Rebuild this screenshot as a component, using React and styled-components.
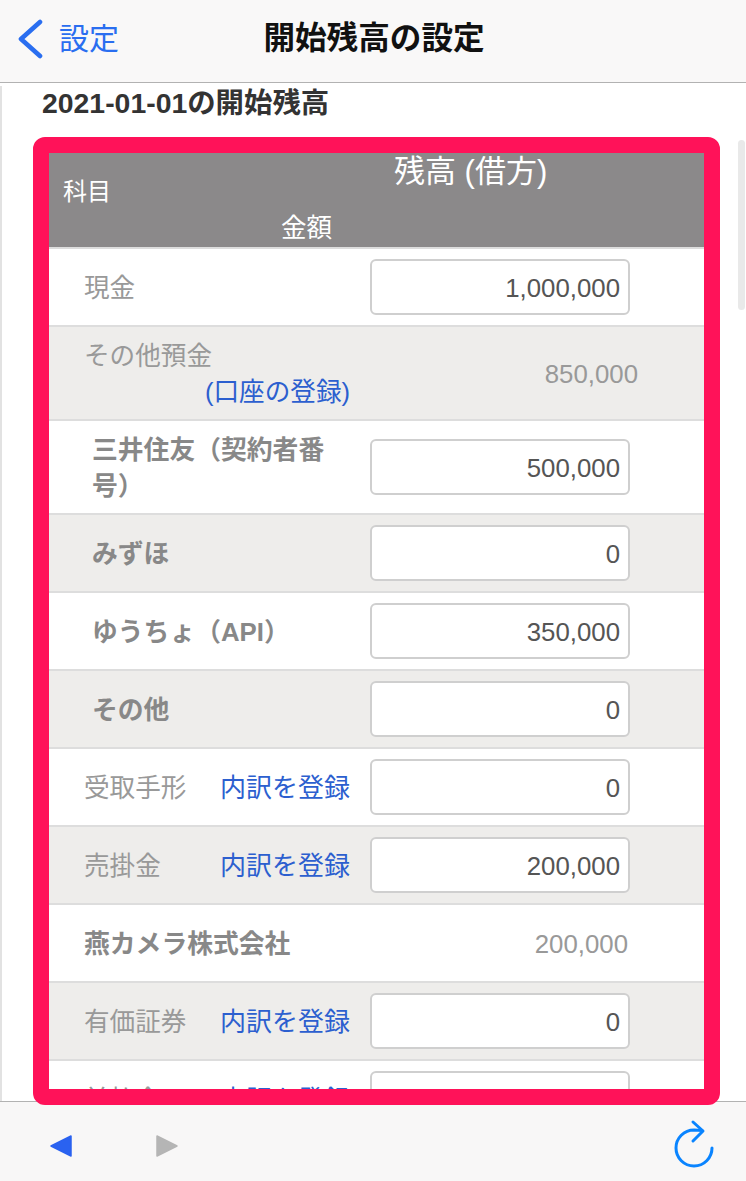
import React from "react";
import styled, { createGlobalStyle } from "styled-components";

const Global = createGlobalStyle`
  html, body { margin: 0; padding: 0; background: #fff; }
  body { font-family: "Liberation Sans", "Noto Sans CJK JP", sans-serif; }
  * { box-sizing: border-box; }
`;

const Page = styled.div`
  width: 746px; height: 1181px; display: flex; flex-direction: column; overflow: hidden; background: #fff;
`;
const TopBar = styled.header`
  height: 83px; flex: none; background: #f9f8f8; border-bottom: 1px solid #b2b2b2;
  display: flex; align-items: center; position: relative; padding-left: 17px; padding-bottom: 5px;
`;
const BackLink = styled.span`
  display: flex; align-items: center; gap: 14px; color: #2a6ef0; font-size: 30px; line-height: 40px;
`;
const Title = styled.h1`
  position: absolute; left: 2px; right: 0; top: 18px; margin: 0; text-align: center;
  font-size: 31.6px; line-height: 40px; font-weight: 700; color: #111;
`;
const Main = styled.main`
  flex: 1 1 0; min-height: 0; position: relative; z-index: 1; border-left: 2px solid #e2e2e2; margin-top: 3px; padding-left: 31px;
`;
const Heading = styled.h2`
  margin: 0; padding-left: 9px; height: 51px; font-size: 28.4px; line-height: 34px; font-weight: 700; color: #333; white-space: nowrap;
`;
const Frame = styled.div`
  width: 687px; height: 968px; border: 16px solid #ff1259; border-radius: 12px; overflow: hidden; background: #fff;
`;
const Scrollbar = styled.div`
  position: absolute; right: 1px; top: 54px; width: 7px; height: 170px; border-radius: 4px; background: #e9e9e9;
`;
const TableHead = styled.div`
  height: 96px; background: #8b898a; border-bottom: 2px solid #dddddd; color: #fff;
  display: grid; grid-template-columns: 190px 135px 1fr; grid-template-rows: 57px 37px;
`;
const HeadSubject = styled.div`
  grid-column: 1; grid-row: 1 / 3; font-size: 24px; line-height: 77px; padding-left: 14px;
`;
const HeadBalance = styled.div`
  grid-column: 2 / 4; grid-row: 1; font-size: 31px; line-height: 38px; padding-left: 155px; white-space: nowrap;
`;
const HeadAmount = styled.div`
  grid-column: 2; grid-row: 2; font-size: 25.6px; line-height: 36px; text-align: center;
`;
const Row = styled.div`
  height: ${(p) => p.$h || 78}px; background: ${(p) => (p.$shade ? "#eeedeb" : "#fff")};
  border-bottom: 2px solid #dddddd; display: grid; grid-template-columns: 321px 1fr; align-items: center;
`;
const LabelCell = styled.div`
  padding: 2px 20px 0 35px; display: flex; justify-content: space-between; align-items: center;
  font-size: 25.6px; line-height: 36px; color: #999; white-space: nowrap;
`;
const StackCell = styled.div`
  padding: 2px 20px 0 35px; font-size: 25.6px; line-height: 36px; color: #999; white-space: nowrap;
`;
const SubLabel = styled.div`
  padding: 2px 20px 0 ${(p) => p.$indent ?? 43}px; font-size: 25.8px; line-height: 36px; font-weight: 700; color: #888;
`;
const AccountLink = styled.span`
  color: #2c5fcf; font-size: 26px;
`;
const RightLink = styled(AccountLink)`
  display: block; text-align: right; font-size: 25.6px;
`;
const AmountInput = styled.div`
  width: 260px; height: 56px; border: 2px solid #cfcfcf; border-radius: 6px; background: #fff;
  font-size: 25.8px; line-height: 52px; color: #555; text-align: right; padding: 1px 8px 0 0;
`;
const StaticValue = styled.div`
  width: ${(p) => p.$w}px; padding-top: 2px; font-size: 25.8px; color: #999; text-align: right;
`;
const BottomBar = styled.footer`
  height: 80px; flex: none; background: #f8f7f7; border-top: 1px solid #b2b2b2;
  display: flex; align-items: center; justify-content: space-between; padding: 4px 30px 0 50px;
`;
const NavGroup = styled.div`
  display: flex; gap: 84px; align-items: center; margin-top: 5px;
`;
const Arrow = styled.svg`
  width: 22px; height: 22px; display: block;
`;

function Triangle({ dir, color }) {
  const pts = dir === "left" ? "21,1 21,21 1,11" : "1,1 1,21 21,11";
  return (
    <Arrow viewBox="0 0 22 22" aria-hidden="true">
      <polygon points={pts} fill={color} stroke={color} strokeWidth="1.5" strokeLinejoin="round" />
    </Arrow>
  );
}

function Input({ children }) {
  return <AmountInput>{children}</AmountInput>;
}

function LinkRow({ label, value, shade }) {
  return (
    <Row $shade={shade}>
      <LabelCell>{label}<AccountLink>内訳を登録</AccountLink></LabelCell>
      <Input>{value}</Input>
    </Row>
  );
}

function SubRow({ label, value, shade, h }) {
  return (
    <Row $shade={shade} $h={h}>
      <SubLabel>{label}</SubLabel>
      <Input>{value}</Input>
    </Row>
  );
}

export default function App() {
  return (
    <Page>
      <Global />
      <TopBar>
        <BackLink>
          <svg width="28" height="40" viewBox="0 0 28 40" aria-hidden="true">
            <path d="M23 3 L4 20 L23 37" fill="none" stroke="#2a6ef0" strokeWidth="4.6" strokeLinecap="round" strokeLinejoin="round" />
          </svg>
          設定
        </BackLink>
        <Title>開始残高の設定</Title>
      </TopBar>
      <Main>
        <Heading>2021-01-01の開始残高</Heading>
        <Frame>
          <TableHead>
            <HeadSubject>科目</HeadSubject>
            <HeadBalance>残高 (借方)</HeadBalance>
            <HeadAmount>金額</HeadAmount>
          </TableHead>
          <Row>
            <LabelCell>現金</LabelCell>
            <Input>1,000,000</Input>
          </Row>
          <Row $shade $h={94}>
            <StackCell>
              その他預金
              <RightLink>(口座の登録)</RightLink>
            </StackCell>
            <StaticValue $w={268}>850,000</StaticValue>
          </Row>
          <SubRow label="三井住友（契約者番号）" value="500,000" h={94} />
          <SubRow label="みずほ" value="0" shade />
          <SubRow label="ゆうちょ（API）" value="350,000" />
          <SubRow label="その他" value="0" shade />
          <LinkRow label="受取手形" value="0" />
          <LinkRow label="売掛金" value="200,000" shade />
          <Row>
            <SubLabel $indent={35}>燕カメラ株式会社</SubLabel>
            <StaticValue $w={258}>200,000</StaticValue>
          </Row>
          <LinkRow label="有価証券" value="0" shade />
          <LinkRow label="前払金" value="" />
        </Frame>
        <Scrollbar />
      </Main>
      <BottomBar>
        <NavGroup>
          <Triangle dir="left" color="#2a62f0" />
          <Triangle dir="right" color="#b5b5b5" />
        </NavGroup>
        <svg width="44" height="52" viewBox="0 0 44 52" aria-hidden="true">
          <path d="M40 30 A18 18 0 1 1 22 12 L30 12.5" fill="none" stroke="#0a84ff" strokeWidth="3" strokeLinecap="round" />
          <path d="M21 4 L31 13 L21 23" fill="none" stroke="#0a84ff" strokeWidth="3" strokeLinecap="round" strokeLinejoin="round" />
        </svg>
      </BottomBar>
    </Page>
  );
}
